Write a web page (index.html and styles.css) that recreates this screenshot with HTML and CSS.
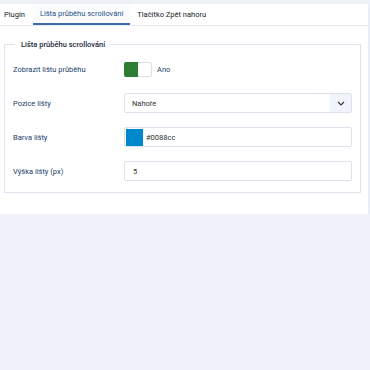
FILE: index.html
```html
<!DOCTYPE html>
<html lang="cs">
<head>
    <meta charset="UTF-8">
    <meta name="viewport" content="width=device-width, initial-scale=1.0">
    <title>Nastavení pluginu</title>
    <link rel="stylesheet" href="styles.css">
</head>
<body>
    <div class="card">
        <!-- Tabs -->
        <div class="tabs">
            <div class="tab">Plugin</div>
            <div class="tab active">Lišta průběhu scrollování</div>
            <div class="tab">Tlačítko Zpět nahoru</div>
        </div>

        <fieldset class="options">
            <legend>Lišta průběhu scrollování</legend>

            <div class="row">
                <label class="label">Zobrazit lištu průběhu</label>
                <div class="control switch-wrap">
                    <span class="switch"><span class="switch-on"></span></span>
                    <span class="switch-text">Ano</span>
                </div>
            </div>

            <div class="row">
                <label class="label">Pozice lišty</label>
                <div class="control select">
                    <span class="select-value">Nahoře</span>
                    <span class="select-arrow">
                        <svg width="8" height="5" viewBox="0 0 8 5"><path d="M1 1l3 3 3-3" fill="none" stroke="#333" stroke-width="1.1"/></svg>
                    </span>
                </div>
            </div>

            <div class="row">
                <label class="label">Barva lišty</label>
                <div class="control input color-input">
                    <span class="swatch"></span>
                    <span>#0088cc</span>
                </div>
            </div>

            <div class="row">
                <label class="label">Výška lišty (px)</label>
                <div class="control input">
                    <span>5</span>
                </div>
            </div>
        </fieldset>
    </div>
</body>
</html>
```

FILE: styles.css
```css
body {
    margin: 0;
    background-color: #eff2f9;
    font-family: Roboto, "Liberation Sans", Arial, sans-serif;
    font-size: 7.5px;
    color: #1f2d3d;
}
.card {
    background-color: #fff;
    margin: 4px 2px 0 0;
    padding-bottom: 21px;
    box-shadow: 0 1px 3px rgba(30, 50, 90, 0.08);
}
/* Tabs */
.tabs {
    display: flex;
    height: 21px;
    border-bottom: 1px solid #e6eaf0;
}
.tab {
    display: flex;
    align-items: center;
    padding: 0 4px;
    color: #15191e;
    font-size: 7.5px;
}
.tab.active {
    padding: 0 7px;
    margin-left: 4px;
    margin-right: 3px;
    color: #1f4f8a;
    border-bottom: 2px solid #3d6da8;
    background-color: #fbfcfe;
}
/* Fieldset */
.options {
    margin: 14px 7px 0 4px;
    padding: 13px 8px 11px 8px;
    border: 1px solid #dde4ee;
}
.options legend {
    padding: 0 6px;
    margin-left: 2px;
    font-weight: 500;
    font-size: 7.5px;
    color: #1c2a3b;
}
.row {
    display: flex;
    align-items: center;
    margin-bottom: 14px;
}
.row:first-of-type {
    margin-bottom: 16px;
}
.row:last-child {
    margin-bottom: 0;
}
.label {
    width: 111px;
    flex-shrink: 0;
    color: #22406b;
}
.control {
    flex-grow: 1;
    height: 20px;
    box-sizing: border-box;
}
.switch-wrap {
    display: flex;
    align-items: center;
    height: 15px;
}
.switch {
    display: inline-flex;
    width: 28px;
    height: 15px;
    box-sizing: border-box;
    border: 1px solid #d9e0ea;
    border-radius: 2px;
}
.switch-on {
    width: 14px;
    margin: -1px 0 -1px -1px;
    background-color: #2e7d32;
    border-radius: 2px 0 0 2px;
}
.switch-text {
    margin-left: 5px;
    color: #22406b;
}
.select, .input {
    display: flex;
    align-items: center;
    border: 1px solid #dbe2ec;
    border-radius: 2px;
    color: #333;
}
.select-value {
    flex-grow: 1;
    padding-left: 7px;
}
.select-arrow {
    width: 21px;
    height: 100%;
    display: flex;
    align-items: center;
    justify-content: center;
    background-color: #f0f3f9;
}
.input {
    padding-left: 8px;
}
.color-input {
    padding-left: 1px;
}
.swatch {
    width: 17px;
    height: 17px;
    background-color: #0088cc;
    margin-right: 3px;
}
```
